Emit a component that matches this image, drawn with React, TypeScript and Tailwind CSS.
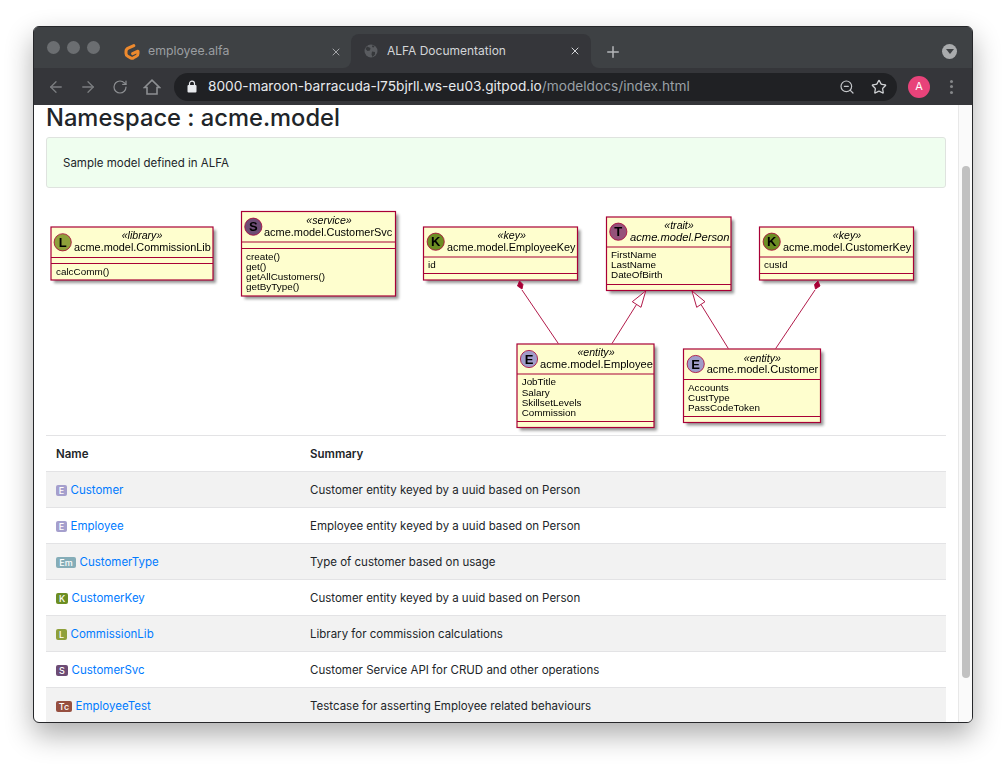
import { ArrowLeft, ArrowRight, RotateCw, Plus, X, Star, ZoomOut } from "lucide-react";

const LINE = "#A80036";
const FILL = "#FEFECE";

type NodeT = {
  x: number; y: number; w: number; h: number; s1: number; s2: number;
  cx: number; cy: number; letter: string; color: string;
  stereo: string; sx: number; sy: number; name: string; nx: number; ny: number; nameSize: number; italic?: boolean;
  items: string[]; ix: number; iy: number[];
};

const nodes: NodeT[] = [
  { x: 51, y: 227, w: 162, h: 53, s1: 257.5, s2: 263.5, cx: 62.7, cy: 242.3, letter: "L", color: "#8EA03A", stereo: "«library»", sx: 142, sy: 239, name: "acme.model.CommissionLib", nx: 74, ny: 251, nameSize: 10.9, items: ["calcComm()"], ix: 56, iy: [275] },
  { x: 241.5, y: 211.5, w: 154, h: 84.5, s1: 242, s2: 248.5, cx: 253.3, cy: 226.7, letter: "S", color: "#6D4C75", stereo: "«service»", sx: 329, sy: 224, name: "acme.model.CustomerSvc", nx: 264, ny: 236, nameSize: 10.95, items: ["create()", "get()", "getAllCustomers()", "getByType()"], ix: 246, iy: [260, 270, 280, 290] },
  { x: 423.5, y: 227, w: 154, h: 53, s1: 257, s2: 273.5, cx: 435.7, cy: 241.7, letter: "K", color: "#6C8E23", stereo: "«key»", sx: 511.7, sy: 239, name: "acme.model.EmployeeKey", nx: 447, ny: 251, nameSize: 10.8, items: ["id"], ix: 428, iy: [268] },
  { x: 606.5, y: 217, w: 124.5, h: 73.5, s1: 247, s2: 284.5, cx: 618.3, cy: 231.7, letter: "T", color: "#95527A", stereo: "«trait»", sx: 679, sy: 229, name: "acme.model.Person", nx: 630, ny: 241, nameSize: 11.2, italic: true, items: ["FirstName", "LastName", "DateOfBirth"], ix: 611, iy: [258, 268, 278] },
  { x: 759.5, y: 227, w: 154, h: 53, s1: 257, s2: 273.5, cx: 771.7, cy: 241.7, letter: "K", color: "#6C8E23", stereo: "«key»", sx: 847, sy: 239, name: "acme.model.CustomerKey", nx: 783, ny: 251, nameSize: 10.9, items: ["cusId"], ix: 764, iy: [268] },
  { x: 517, y: 344, w: 137, h: 83.5, s1: 374, s2: 421.5, cx: 529, cy: 359, letter: "E", color: "#A09CC9", stereo: "«entity»", sx: 596, sy: 356, name: "acme.model.Employee", nx: 540, ny: 368, nameSize: 11.1, items: ["JobTitle", "Salary", "SkillsetLevels", "Commission"], ix: 521.7, iy: [385, 396, 406, 416] },
  { x: 683.5, y: 349, w: 137, h: 73.5, s1: 379.5, s2: 416.5, cx: 695.7, cy: 364, letter: "E", color: "#A09CC9", stereo: "«entity»", sx: 762.3, sy: 361.5, name: "acme.model.Customer", nx: 706.7, ny: 373, nameSize: 11.1, items: ["Accounts", "CustType", "PassCodeToken"], ix: 688, iy: [391, 401, 411] },
];

const rows = [
  { badge: "E", color: "bg-[#a59fcd]", w: "w-[11px]", name: "Customer", summary: "Customer entity keyed by a uuid based on Person" },
  { badge: "E", color: "bg-[#a59fcd]", w: "w-[11px]", name: "Employee", summary: "Employee entity keyed by a uuid based on Person" },
  { badge: "Em", color: "bg-[#85adb8]", w: "w-[20px]", name: "CustomerType", summary: "Type of customer based on usage" },
  { badge: "K", color: "bg-[#6c8e23]", w: "w-[12px]", name: "CustomerKey", summary: "Customer entity keyed by a uuid based on Person" },
  { badge: "L", color: "bg-[#8ea03a]", w: "w-[11px]", name: "CommissionLib", summary: "Library for commission calculations" },
  { badge: "S", color: "bg-[#6d4c75]", w: "w-[12px]", name: "CustomerSvc", summary: "Customer Service API for CRUD and other operations" },
  { badge: "Tc", color: "bg-[#964f40]", w: "w-[16px]", name: "EmployeeTest", summary: "Testcase for asserting Employee related behaviours" },
];

function Diagram() {
  return (
    <svg viewBox="46 200 900 235" className="block w-[900px] h-[235px] blur-[0.4px]" style={{ fontFamily: '"Liberation Sans", Arial, sans-serif' }}>
      <defs>
        <filter id="sh" x="-10%" y="-10%" width="125%" height="125%">
          <feGaussianBlur stdDeviation="1.8" />
        </filter>
      </defs>
      {nodes.map((n) => (
        <rect key={n.name + "s"} x={n.x + 3} y={n.y + 3} width={n.w} height={n.h} fill="#000" opacity="0.42" filter="url(#sh)" />
      ))}
      <g stroke={LINE} fill="none" strokeWidth="0.9">
        <line x1="522" y1="290" x2="558.3" y2="343.5" />
        <line x1="815" y1="290" x2="775.7" y2="348.5" />
        <line x1="636.5" y1="304.5" x2="612" y2="343.5" />
        <line x1="701" y1="304.5" x2="728.3" y2="348.5" />
        <polygon points="645.7,291 632.3,301.7 641,307.3" fill="#fff" />
        <polygon points="692,291 705,301.7 696.7,307.3" fill="#fff" />
        <polygon points="519.5,281 523,284.5 522,289 517.5,286" fill={LINE} />
        <polygon points="818,281 820,286 815.5,289 814.5,284.5" fill={LINE} />
      </g>
      {nodes.map((n) => (
        <g key={n.name}>
          <rect x={n.x} y={n.y} width={n.w} height={n.h} fill={FILL} stroke={LINE} strokeWidth="1.2" />
          <line x1={n.x} x2={n.x + n.w} y1={n.s1} y2={n.s1} stroke={LINE} strokeWidth="1" />
          <line x1={n.x} x2={n.x + n.w} y1={n.s2} y2={n.s2} stroke={LINE} strokeWidth="1" />
          <circle cx={n.cx} cy={n.cy} r="8.6" fill={n.color} stroke={LINE} strokeWidth="0.8" />
          <text x={n.cx} y={n.cy + 4.6} textAnchor="middle" fontSize="13" fontWeight="700" fill="#000">{n.letter}</text>
          <text x={n.sx} y={n.sy} textAnchor="middle" fontSize="10.6" fontStyle="italic" fill="#000">{n.stereo}</text>
          <text x={n.nx} y={n.ny} fontSize={n.nameSize} fontStyle={n.italic ? "italic" : "normal"} fill="#000">{n.name}</text>
          {n.items.map((it, i) => (
            <text key={it} x={n.ix} y={n.iy[i]} fontSize="9.9" fill="#000">{it}</text>
          ))}
        </g>
      ))}
    </svg>
  );
}

function HomeIcon() {
  return (
    <svg width="18" height="18" viewBox="0 0 18 18" fill="none" stroke="#8d8f92" strokeWidth="1.6" strokeLinejoin="miter">
      <path d="M1.5 9.5 9 2.2l7.5 7.3H14V16H4V9.5Z" />
    </svg>
  );
}

function LockIcon() {
  return (
    <svg width="10" height="13" viewBox="0 0 10 13" className="shrink-0">
      <path d="M2.5 6V3.6a2.5 2.5 0 0 1 5 0V6" fill="none" stroke="#e8eaed" strokeWidth="1.2" />
      <rect x="0.5" y="5" width="9" height="7.5" rx="1" fill="#e8eaed" />
    </svg>
  );
}

function GLogo() {
  return (
    <svg width="16" height="17" viewBox="0 0 16 17" fill="none" stroke="#ee8a2e" strokeWidth="3" strokeLinecap="round" strokeLinejoin="round">
      <path d="M9.8 2.6 4.2 5.2 C2.6 6 2 7 2 8.4 V10.5 C2 11.8 2.6 12.7 3.7 13.3 L6.6 14.8 C7.6 15.3 8.6 15.3 9.6 14.8 L12.4 13.3 C13.5 12.7 14 11.8 14 10.5 V8.2 L8.6 10.6" />
    </svg>
  );
}

function Globe() {
  return (
    <svg width="14" height="14" viewBox="0 0 14 14">
      <circle cx="7" cy="7" r="6.5" fill="#5a5c60" />
      <path d="M3 2.5 6.5 4 6 6.5 3.5 7 1.5 5ZM8 7.5l3 .5 0 2.5-2.5 2.5-1-2.5ZM8.5 1.2 10.5 2 9.5 3.5 8 3Z" fill="#36383b" />
    </svg>
  );
}

export default function App() {
  return (
    <div className="w-[1007px] h-[764px] overflow-hidden bg-white pt-[26px] pl-[33px]" style={{ fontFamily: 'Inter, "Liberation Sans", sans-serif' }}>
      <div className="w-[940px] h-[697px] rounded-[6px] overflow-hidden border border-[#26272a] flex flex-col bg-white shadow-[0_12px_28px_rgba(0,0,0,0.32)]">
        {/* Tab strip */}
        <div className="h-[41px] shrink-0 flex bg-[#35363a]">
          <div className="w-[317px] h-full bg-[#3e4144] rounded-br-[8px] flex items-center">
            <div className="flex items-center gap-[7px] pl-[13px] w-[78px] shrink-0">
              <span className="w-[13px] h-[13px] rounded-full bg-[#6b6e71] shrink-0" />
              <span className="w-[13px] h-[13px] rounded-full bg-[#6b6e71] shrink-0" />
              <span className="w-[13px] h-[13px] rounded-full bg-[#6b6e71] shrink-0" />
            </div>
            <div className="flex items-center ml-[12px] flex-1 pr-[9px] pt-[8px]">
              <GLogo />
              <span className="ml-[8px] text-[12.3px] text-[#9b9ea1] flex-1">employee.alfa</span>
              <X size={12} color="#a3a5a8" strokeWidth={2} />
            </div>
          </div>
          <div className="w-[240px] h-full bg-[#3e4144] pt-[7px]">
            <div className="h-full bg-[#35363a] rounded-t-[8px] flex items-center pl-[13px] pr-[10px] pb-[1px]">
              <Globe />
              <span className="ml-[9px] text-[12px] text-[#d3d5d8] flex-1">ALFA Documentation</span>
              <X size={12} color="#d3d5d8" strokeWidth={2} />
            </div>
          </div>
          <div className="flex-1 h-full bg-[#3e4144] rounded-bl-[8px] flex items-center pl-[13px] pr-[15px] pt-[8px]">
            <Plus size={18} color="#b4b6b9" strokeWidth={2} />
            <div className="ml-auto w-[15px] h-[15px] rounded-full bg-[#a9abad] flex items-center justify-center -mt-[8px] translate-y-[4px]">
              <span className="w-0 h-0 border-l-[4px] border-r-[4px] border-t-[5px] border-l-transparent border-r-transparent border-t-[#3e4144]" />
            </div>
          </div>
        </div>

        {/* Toolbar */}
        <div className="h-[37px] shrink-0 bg-[#35363a] flex items-center pl-[13px]">
          <ArrowLeft size={18} color="#7c7e81" strokeWidth={1.7} />
          <ArrowRight size={18} color="#7c7e81" strokeWidth={1.7} className="ml-[14px]" />
          <RotateCw size={16} color="#8d8f92" strokeWidth={1.8} className="ml-[15px]" />
          <div className="ml-[15px]"><HomeIcon /></div>
          <div className="ml-[13px] w-[723px] h-[28px] rounded-full bg-[#202124] flex items-center pl-[13px] pr-[10px]">
            <LockIcon />
            <span className="ml-[11px] text-[13.7px] text-[#e8eaed] whitespace-nowrap">
              8000-maroon-barracuda-l75bjrll.ws-eu03.gitpod.io<span className="text-[#9aa0a6]">/modeldocs/index.html</span>
            </span>
            <ZoomOut size={16} color="#c4c6c9" strokeWidth={1.8} className="ml-auto" />
            <Star size={16} color="#d0d2d5" strokeWidth={1.9} className="ml-[16px]" />
          </div>
          <div className="ml-[11px] w-[22px] h-[22px] rounded-full bg-[#e8437a] text-white text-[11px] flex items-center justify-center">A</div>
          <div className="ml-[20px] flex flex-col gap-[2.5px]">
            <span className="w-[3px] h-[3px] rounded-full bg-[#858789]" />
            <span className="w-[3px] h-[3px] rounded-full bg-[#858789]" />
            <span className="w-[3px] h-[3px] rounded-full bg-[#858789]" />
          </div>
        </div>

        {/* Page */}
        <div className="flex-1 flex min-h-0">
          <div className="flex-1 min-w-0 pl-[12px] pr-[12px] text-[#212529]">
            <h1 className="text-[23.7px] leading-[26px] font-medium whitespace-nowrap">Namespace : acme.model</h1>
            <div className="mt-[6px] h-[51px] rounded-[3px] border border-[#dfe3df] bg-[#effeef] pl-[16px] pt-[2px] flex items-center text-[11.5px]">
              Sample model defined in ALFA
            </div>
            <div className="mt-[12px]"><Diagram /></div>
            <table className="w-[900px] table-fixed border-collapse text-[11.5px]">
              <thead>
                <tr className="h-[36px] border-t border-[#e3e3e5]">
                  <th className="w-[254px] pl-[10px] pt-[2px] text-left font-semibold">Name</th>
                  <th className="pl-[10px] pt-[2px] text-left font-semibold">Summary</th>
                </tr>
              </thead>
              <tbody>
                {rows.map((r, i) => (
                  <tr key={r.name} className={"h-[36px] border-t border-[#e3e3e5] " + (i % 2 === 0 ? "bg-[#f2f2f2]" : "bg-white")}>
                    <td className="pl-[10px] pt-[2px]">
                      <div className="flex items-center">
                        <span className={r.w + " " + r.color + " h-[11px] rounded-[2px] text-white text-[9px] leading-[11px] text-center font-medium"}>{r.badge}</span>
                        <span className="ml-[3.5px] text-[#007bff]">{r.name}</span>
                      </div>
                    </td>
                    <td className="pl-[10px] pt-[2px]">{r.summary}</td>
                  </tr>
                ))}
              </tbody>
            </table>
          </div>
          {/* Scrollbar */}
          <div className="w-[14px] shrink-0 border-l border-[#e8e8e8] bg-[#fafafa] pl-[3px] pt-[61px]">
            <div className="w-[8px] h-[512px] rounded-full bg-[#c1c1c1]" />
          </div>
        </div>
      </div>
    </div>
  );
}
